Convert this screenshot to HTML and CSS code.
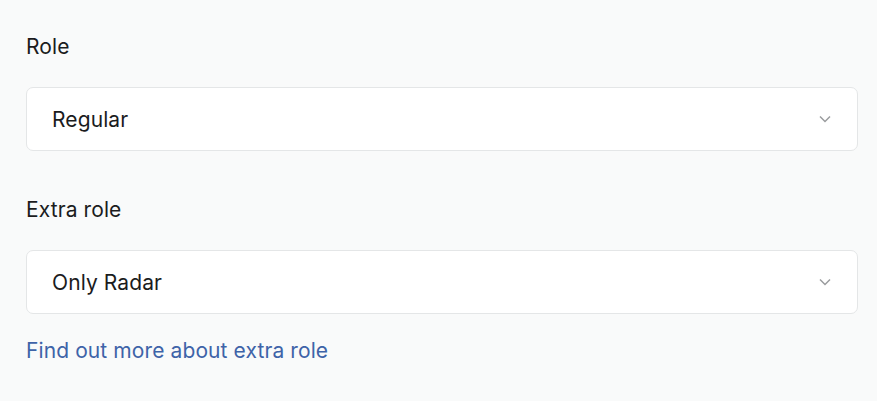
FILE: index.html
```html
<!DOCTYPE html>
<html lang="en">
<head>
    <meta charset="UTF-8">
    <meta name="viewport" content="width=device-width, initial-scale=1.0">
    <title>Role settings</title>
    <link rel="stylesheet" href="styles.css">
</head>
<body>
    <form class="role-form">
        <div class="field">
            <label class="field-label" for="role">Role</label>
            <div class="select-box" id="role">
                <span class="select-value">Regular</span>
                <svg class="chevron" width="12" height="8" viewBox="0 0 12 8">
                    <path d="M1 1.5 L6 6.5 L11 1.5" fill="none" stroke="#9a9c9e" stroke-width="1.5"/>
                </svg>
            </div>
        </div>

        <div class="field">
            <label class="field-label" for="extraRole">Extra role</label>
            <div class="select-box" id="extraRole">
                <span class="select-value">Only Radar</span>
                <svg class="chevron" width="12" height="8" viewBox="0 0 12 8">
                    <path d="M1 1.5 L6 6.5 L11 1.5" fill="none" stroke="#9a9c9e" stroke-width="1.5"/>
                </svg>
            </div>
            <a class="help-link" href="#">Find out more about extra role</a>
        </div>
    </form>
</body>
</html>
```

FILE: styles.css
```css
body {
    margin: 0;
    background-color: #f9fafa;
    font-family: "Inter", "Noto Sans", sans-serif;
    font-size: 21px;
    letter-spacing: 0.1px;
    color: #1b1c1d;
}
.role-form {
    padding: 30px 19px 0 26px;
    display: flex;
    flex-direction: column;
    gap: 42px;
}
.field {
    display: flex;
    flex-direction: column;
}
.field-label {
    line-height: 34px;
    margin-bottom: 23px;
}
.select-box {
    display: flex;
    align-items: center;
    justify-content: space-between;
    height: 62px;
    padding: 0 26px 0 25px;
    background-color: #fff;
    border: 1px solid #e4e6e7;
    border-radius: 7px;
}
.select-value {
    padding-top: 1px;
}
.chevron {
    display: block;
}
.help-link {
    margin-top: 22px;
    line-height: 30px;
    color: #3e63a8;
    text-decoration: none;
}
```
